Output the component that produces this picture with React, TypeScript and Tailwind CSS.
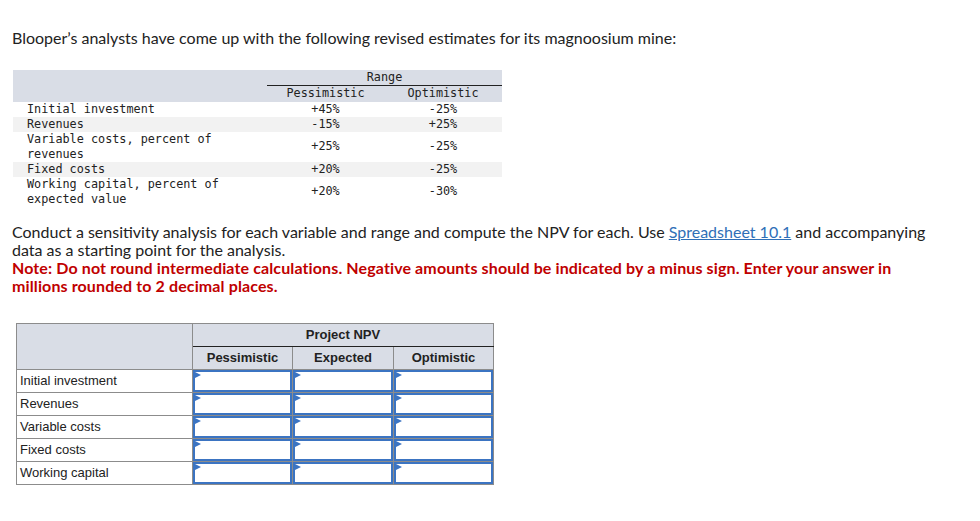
import React from 'react';

const ranges = [
  { label: ['Initial investment'], pess: '+45%', opt: '-25%', shade: false },
  { label: ['Revenues'], pess: '-15%', opt: '+25%', shade: true },
  { label: ['Variable costs, percent of', 'revenues'], pess: '+25%', opt: '-25%', shade: false },
  { label: ['Fixed costs'], pess: '+20%', opt: '-25%', shade: true },
  { label: ['Working capital, percent of', 'expected value'], pess: '+20%', opt: '-30%', shade: false },
];

const npvRows = ['Initial investment', 'Revenues', 'Variable costs', 'Fixed costs', 'Working capital'];

const InputCell: React.FC = () => (
  <td className="border border-[#8c8c8c] p-0 h-[23px]">
    <div className="relative h-[22px] border-2 border-[#3b74c2] bg-white">
      <span className="absolute left-0 top-0 w-0 h-0 border-y-[3px] border-y-transparent border-l-[6px] border-l-[#3b74c2]" />
    </div>
  </td>
);

export default function App() {
  return (
    <div className="w-[980px] h-[521px] bg-white text-[#222] font-['Lato','Liberation_Sans',sans-serif]">
      <p className="pt-[29px] pl-[12px] text-[16px] leading-[18px]">
        Blooper’s analysts have come up with the following revised estimates for its magnoosium mine:
      </p>

      <table className="ml-[13px] mt-[23px] w-[489px] border-collapse font-['DejaVu_Sans_Mono','Liberation_Mono',monospace] text-[11.8px] leading-[15px] text-[#222]">
        <thead>
          <tr className="bg-[#d9dde6]">
            <th className="w-[254px]" />
            <th colSpan={2} className="font-normal border-b border-[#222] h-[15px] align-bottom">Range</th>
          </tr>
          <tr className="bg-[#d9dde6]">
            <th />
            <th className="w-[117px] font-normal h-[16px]">Pessimistic</th>
            <th className="font-normal">Optimistic</th>
          </tr>
        </thead>
        <tbody>
          {ranges.map((r) => (
            <tr key={r.label[0]} className={r.shade ? 'bg-[#f2f2f2]' : ''}>
              <td className="pl-[14px] text-left align-middle">
                {r.label.map((l) => (
                  <div key={l}>{l}</div>
                ))}
              </td>
              <td className="text-center">{r.pess}</td>
              <td className="text-center">{r.opt}</td>
            </tr>
          ))}
        </tbody>
      </table>

      <div className="pl-[12px] w-[945px] mt-[16px] text-[16px] leading-[18px]">
        <p>
          Conduct a sensitivity analysis for each variable and range and compute the NPV for each. Use{' '}
          <span className="text-[#2f6fb7] underline">Spreadsheet 10.1</span> and accompanying data as a starting point for
          the analysis.
        </p>
        <p className="text-[#c00000] font-bold tracking-[0.12px]">
          Note: Do not round intermediate calculations. Negative amounts should be indicated by a minus sign. Enter your
          answer in millions rounded to 2 decimal places.
        </p>
      </div>

      <table className="ml-[16px] mt-[28px] w-[478px] border-collapse border border-[#8c8c8c] font-['Liberation_Sans',Arial,sans-serif] text-[13px] text-[#222]">
        <thead>
          <tr className="bg-[#d9dde6]">
            <th rowSpan={2} className="w-[176px] border border-[#8c8c8c]" />
            <th colSpan={3} className="h-[23px] border-b border-b-[#222] border-x border-x-[#8c8c8c] font-bold">
              Project NPV
            </th>
          </tr>
          <tr className="bg-[#d9dde6]">
            <th className="w-[100px] h-[23px] border border-[#8c8c8c] font-bold">Pessimistic</th>
            <th className="w-[101px] border border-[#8c8c8c] font-bold">Expected</th>
            <th className="border border-[#8c8c8c] font-bold">Optimistic</th>
          </tr>
        </thead>
        <tbody>
          {npvRows.map((label) => (
            <tr key={label}>
              <td className="border border-[#8c8c8c] pl-[3px] h-[23px] text-left">{label}</td>
              <InputCell />
              <InputCell />
              <InputCell />
            </tr>
          ))}
        </tbody>
      </table>
    </div>
  );
}
